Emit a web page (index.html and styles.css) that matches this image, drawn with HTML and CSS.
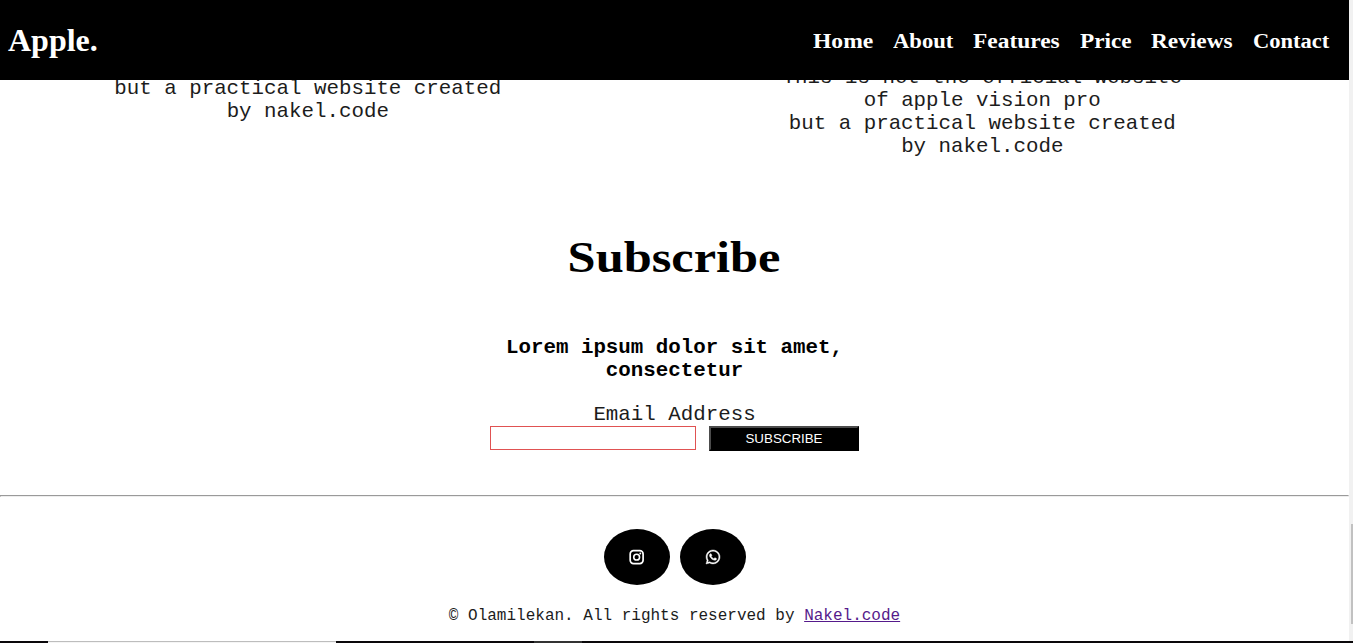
FILE: index.html
```html
<!DOCTYPE html>
<html lang="en">
<head>
<meta charset="utf-8">
<title>Apple.</title>
<link rel="stylesheet" href="styles.css">
</head>
<body>
<div class="window">
  <div class="view">
    <div class="page">
      <header class="header">
        <div class="logo">Apple.</div>
        <nav class="nav">
          <a class="home"><span>Home</span></a>
          <a class="about"><span>About</span></a>
          <a class="features"><span>Features</span></a>
          <a class="price"><span>Price</span></a>
          <a class="reviews"><span>Reviews</span></a>
          <a class="contact"><span>Contact</span></a>
        </nav>
      </header>
      <section class="notes">
        <p class="note note-left">but a practical website created<br>by nakel.code</p>
        <p class="note note-right">This is not the official website<br>of apple vision pro<br>but a practical website created<br>by nakel.code</p>
      </section>
      <section class="subscribe">
        <h1 class="title"><span>Subscribe</span></h1>
        <p class="lead">Lorem ipsum dolor sit amet,<br>consectetur</p>
        <label class="label" for="email">Email Address</label>
        <div class="form">
          <input class="email" id="email" type="email">
          <button class="button">SUBSCRIBE</button>
        </div>
      </section>
      <hr class="rule">
      <footer class="footer">
        <div class="socials">
          <a class="social"><svg width="16" height="16" viewBox="0 0 16 16" fill="none" stroke="#fff"><rect x="1.200" y="1.700" width="12.900" height="12.900" rx="3.300" stroke-width="1.700"/><circle cx="7.650" cy="8.150" r="2.900" stroke-width="1.600"/><circle cx="11.300" cy="4.500" r=".95" fill="#fff" stroke="none"/></svg></a>
          <a class="social"><svg width="16" height="16" viewBox="0 0 448 512"><path fill="#fff" stroke="#fff" stroke-width="14" d="M380.900 97.100C339 55.100 283.200 32 223.900 32c-122.400 0-222 99.600-222 222 0 39.100 10.200 77.300 29.600 111L0 480l117.700-30.900c32.400 17.700 68.900 27 106.100 27h.1c122.300 0 224.100-99.600 224.100-222 0-59.300-25.200-115-67.100-157zm-157 341.600c-33.200 0-65.700-8.900-94-25.700l-6.700-4-69.800 18.300L72 359.200l-4.400-7c-18.500-29.400-28.200-63.300-28.200-98.200 0-101.700 82.800-184.500 184.600-184.500 49.300 0 95.600 19.200 130.400 54.100 34.800 34.900 56.200 81.200 56.100 130.500 0 101.800-84.900 184.600-186.600 184.600zm101.200-138.200c-5.500-2.800-32.800-16.200-37.900-18-5.100-1.900-8.800-2.800-12.500 2.800-3.700 5.600-14.300 18-17.600 21.800-3.200 3.700-6.500 4.200-12 1.400-32.600-16.300-54-29.100-75.500-66-5.700-9.800 5.700-9.100 16.300-30.300 1.800-3.700.9-6.900-.5-9.700-1.400-2.800-12.500-30.100-17.100-41.200-4.500-10.800-9.100-9.300-12.500-9.500-3.200-.2-6.900-.2-10.600-.2-3.700 0-9.700 1.400-14.800 6.900-5.100 5.600-19.400 19-19.400 46.300 0 27.300 19.900 53.700 22.600 57.400 2.800 3.700 39.100 59.700 94.800 83.800 35.200 15.200 49 16.500 66.600 13.900 10.700-1.600 32.800-13.400 37.400-26.400 4.600-13 4.600-24.100 3.200-26.400-1.300-2.500-5-3.900-10.500-6.600z"/></svg></a>
        </div>
        <p class="copyright">© Olamilekan. All rights reserved by <a class="credit">Nakel.code</a></p>
      </footer>
    </div>
    <div class="scrollbar"><div class="thumb"></div></div>
  </div>
  <div class="taskbar"><div class="task-light"></div><div class="task-dim"></div></div>
</div>
</body>
</html>
```
FILE: styles.css
```css
* { box-sizing: border-box; }
body { margin: 0; background: #fff; color: #000; }
p, h1 { margin: 0; }
.window { display: flex; flex-direction: column; width: 1353px; height: 643px; overflow: hidden; }
.view { display: flex; height: 641px; }
.page { width: 1349px; display: flex; flex-direction: column; font: 20.8px/23px "Liberation Mono", monospace; }
.header { position: relative; z-index: 1; flex: none; display: flex; justify-content: space-between; align-items: center; height: 80px; padding: 0 20px 0 8px; background: #000; color: #fff; }
.logo { font: bold 32px/36px "Liberation Serif", serif; }
.nav { display: flex; gap: 20px; padding-top: 2px; font: bold 20px/24px "Liberation Serif", serif; }
.nav span { display: inline-block; transform-origin: left; }
.home { width: 60px; }
.home span { transform: scaleX(1.18); }
.about { width: 60.5px; }
.about span { transform: scaleX(1.13); }
.features { width: 86.5px; }
.features span { transform: scaleX(1.17); }
.price { width: 51.5px; }
.price span { transform: scaleX(1.16); }
.reviews { width: 81.5px; }
.reviews span { transform: scaleX(1.165); }
.contact { width: 76.5px; }
.contact span { transform: scaleX(1.125); }
.notes { flex: none; display: flex; height: 151px; text-align: center; color: #1c1c1c; }
.note { flex: 1; padding-right: 59px; }
.note-left { margin-top: -3px; }
.note-right { margin-top: -14px; }
.subscribe { flex: none; display: flex; flex-direction: column; align-items: center; height: 264px; text-align: center; }
.title { font: bold 45px/52px "Liberation Serif", serif; }
.title span { display: inline-block; transform: scaleX(1.12); }
.lead { margin-top: 53px; font-weight: bold; }
.label { margin-top: 21px; color: #1c1c1c; }
.form { display: flex; gap: 13px; align-items: flex-start; }
.email { width: 206px; height: 24px; margin: 0; border: 1px solid #e05252; background: #fff; }
.button { width: 150px; height: 25px; padding: 0; border: 2px solid; border-color: #4c4c4c #000 #000 #4c4c4c; background: #000; color: #fff; font: 13.333px "Liberation Sans", sans-serif; }
.rule { flex: none; width: 100%; height: 2px; margin: 0; border: 1px solid; border-color: #9a9a9a #eee #eee #9a9a9a; }
.footer { display: flex; flex-direction: column; align-items: center; padding-top: 32px; }
.socials { display: flex; gap: 10px; }
.social { display: flex; justify-content: center; align-items: center; width: 66px; height: 56px; border-radius: 50%; background: #000; }
.copyright { margin-top: 22px; font-size: 16px; line-height: 18px; color: #1c1c1c; }
.credit { color: #551a8b; text-decoration: underline; }
.scrollbar { width: 4px; padding: 524px 0 0 2px; background: #f1f1f1; }
.thumb { height: 100px; background: #c1c1c1; }
.taskbar { display: flex; height: 2px; background: #0a080a; }
.task-light { width: 288px; height: 2px; margin-left: 48px; border-top: 1px solid #bdbdbd; background: #f5f5f5; }
.task-dim { width: 48px; height: 2px; margin-left: 198px; background: #333; }
```
